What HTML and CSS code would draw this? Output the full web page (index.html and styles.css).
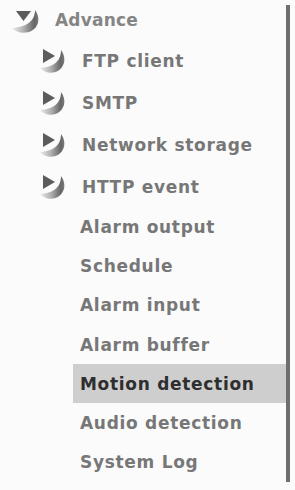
FILE: index.html
```html
<!DOCTYPE html>
<html>
<head>
<meta charset="utf-8">
<link rel="stylesheet" href="styles.css">
</head>
<body>
<svg class="defs" width="0" height="0">
  <defs>
    <linearGradient id="g1" x1="0" y1="0.5" x2="1" y2="0.5">
      <stop offset="0" stop-color="#ececec"/>
      <stop offset="0.45" stop-color="#b0b0b0"/>
      <stop offset="0.85" stop-color="#666"/>
      <stop offset="1" stop-color="#7a7a7a"/>
    </linearGradient>
  </defs>
</svg>
<div class="panel">
  <div class="row top">
    <svg class="ico" viewBox="0 0 30 28" width="30" height="28">
      <polygon points="6,4 21,4 13.5,14" fill="#5c5c5c"/>
      <path d="M2 21 C8 28, 24 28, 28 16 C29 11, 28 7, 25 3 C25 12, 19 20, 2 21 Z" fill="url(#g1)"/>
    </svg>
    <span class="lbl">Advance</span>
  </div>
  <div class="row sub">
    <svg class="ico" viewBox="0 0 28 28" width="28" height="28">
      <polygon points="5,2 17,9 5,16" fill="#5c5c5c"/>
      <path d="M2 21 C8 28, 22 28, 26 16 C27 11, 26 7, 23 3 C23 12, 18 20, 2 21 Z" fill="url(#g1)"/>
    </svg>
    <span class="lbl">FTP client</span>
  </div>
  <div class="row sub">
    <svg class="ico" viewBox="0 0 28 28" width="28" height="28">
      <polygon points="5,2 17,9 5,16" fill="#5c5c5c"/>
      <path d="M2 21 C8 28, 22 28, 26 16 C27 11, 26 7, 23 3 C23 12, 18 20, 2 21 Z" fill="url(#g1)"/>
    </svg>
    <span class="lbl">SMTP</span>
  </div>
  <div class="row sub">
    <svg class="ico" viewBox="0 0 28 28" width="28" height="28">
      <polygon points="5,2 17,9 5,16" fill="#5c5c5c"/>
      <path d="M2 21 C8 28, 22 28, 26 16 C27 11, 26 7, 23 3 C23 12, 18 20, 2 21 Z" fill="url(#g1)"/>
    </svg>
    <span class="lbl">Network storage</span>
  </div>
  <div class="row sub short">
    <svg class="ico" viewBox="0 0 28 28" width="28" height="28">
      <polygon points="5,2 17,9 5,16" fill="#5c5c5c"/>
      <path d="M2 21 C8 28, 22 28, 26 16 C27 11, 26 7, 23 3 C23 12, 18 20, 2 21 Z" fill="url(#g1)"/>
    </svg>
    <span class="lbl">HTTP event</span>
  </div>
  <div class="row leaf">Alarm output</div>
  <div class="row leaf">Schedule</div>
  <div class="row leaf">Alarm input</div>
  <div class="row leaf">Alarm buffer</div>
  <div class="row leaf active">Motion detection</div>
  <div class="row leaf">Audio detection</div>
  <div class="row leaf">System Log</div>
</div>
</body>
</html>
```
FILE: styles.css
```css
html, body {
  margin: 0;
  padding: 0;
  background: #fbfbfb;
}
body {
  font-family: "DejaVu Sans", Verdana, sans-serif;
  font-weight: bold;
  font-size: 17px;
  letter-spacing: 0.7px;
  color: #777;
}
.defs {
  position: absolute;
}
.panel {
  width: 286px;
  height: 482px;
  background: #fbfbfb;
  box-shadow: 4px 5px 0 #6f6f6f;
  display: flex;
  flex-direction: column;
  overflow: hidden;
}
.row {
  display: flex;
  align-items: center;
  flex: none;
}
.top {
  height: 40px;
  padding-left: 10px;
  gap: 15px;
  color: #858585;
  letter-spacing: 0.2px;
}
.top .ico {
  margin-top: 2px;
}
.sub {
  height: 42px;
  padding-left: 38px;
  gap: 16px;
}
.sub.short {
  height: 41px;
}
.leaf {
  height: 39.3px;
  margin-left: 73px;
  padding-left: 7px;
}
.active {
  background: #cecece;
  color: #2e2e2e;
}
.ico {
  flex: none;
  display: block;
}
```
